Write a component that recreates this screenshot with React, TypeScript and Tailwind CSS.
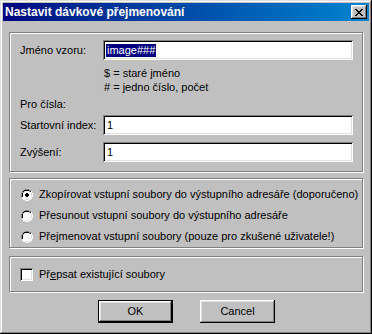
import React from "react";

const font = { fontFamily: '"Liberation Sans", Arial, sans-serif' };

function Radio({ checked }: { checked?: boolean }) {
  return (
    <svg width="12" height="12" viewBox="0 0 12 12" className="shrink-0">
      <path d="M4 0h4v1h2v1h1v2h1v4h-1v2h-1v1h-2v1h-4v-1h-2v-1h-1v-2h-1v-4h1v-2h1v-1h2z" fill="#fff" />
      <path d="M4 0h4v1h2v1h-2v-1h-4v1h-2v2h-1v4h-1v-4h1v-2h1v-1h2z" fill="#808080" />
      <path d="M4 1h4v1h2v1h-2v-1h-4v1h-1v1h-1v4h-1v-4h1v-2h1v-1h1z" fill="#000" />
      <path d="M11 4h1v4h-1v2h-1v1h-2v1h-4v-1h4v-1h2v-2h1z" fill="#fff" />
      <path d="M10 4h1v4h-1v2h-2v1h-4v-1h4v-1h1v-1h1z" fill="#dfdfdf" />
      <rect x="2" y="2" width="8" height="8" rx="3" fill="#fff" />
      {checked && <path d="M5 4h2v1h1v2h-1v1h-2v-1h-1v-2h1z" fill="#000" />}
    </svg>
  );
}

const sunken =
  "bg-white shadow-[inset_1px_1px_0_#808080,inset_-1px_-1px_0_#fff,inset_2px_2px_0_#000,inset_-2px_-2px_0_#dfdfdf]";
const raised =
  "shadow-[inset_-1px_-1px_0_#000,inset_1px_1px_0_#fff,inset_-2px_-2px_0_#808080,inset_2px_2px_0_#dfdfdf]";
const group =
  "border border-[#808080] shadow-[inset_1px_1px_0_#fff,1px_1px_0_#fff]";

export default function App() {
  return (
    <div
      style={font}
      className="w-[372px] h-[334px] bg-[#c0c0c0] p-[3px] text-[11px] text-black shadow-[inset_-1px_-1px_0_#000,inset_1px_1px_0_#dfdfdf,inset_-2px_-2px_0_#808080,inset_2px_2px_0_#fff] flex flex-col"
    >
      <div className="h-[18px] flex items-center justify-between pl-[2px] pr-[2px] bg-gradient-to-r from-[#000080] to-[#1084d0]">
        <span className="text-white font-bold text-[12px] leading-none">Nastavit dávkové přejmenování</span>
        <div className={`w-[16px] h-[14px] bg-[#c0c0c0] flex items-center justify-center ${raised}`}>
          <svg width="8" height="7" viewBox="0 0 8 7">
            <path d="M0 0h2v1h1v1h2v-1h1v-1h2v1h-1v1h-1v1h-1v1h1v1h1v1h1v1h-2v-1h-1v-1h-2v1h-1v1h-2v-1h1v-1h1v-1h1v-1h-1v-1h-1v-1h-1z" fill="#000" />
          </svg>
        </div>
      </div>

      <div className="flex flex-col px-[6px] pt-[11px]">
        {/* group 1 */}
        <div className={`${group} h-[140px] pl-[10px] pr-[9px] pt-[7px] flex flex-col`}>
          <div className="flex items-center h-[20px]">
            <span className="w-[83px]">Jméno vzoru:</span>
            <div className={`${sunken} flex-1 h-[20px] flex items-center pl-[3px]`}>
              <span className="bg-[#000080] text-white leading-[13px] px-[1px]">image###</span>
            </div>
          </div>
          <div className="pl-[84px] mt-[6px] leading-[14px]">
            <div>$ = staré jméno</div>
            <div>&#35; = jedno číslo, počet</div>
          </div>
          <div className="mt-[3px] leading-[14px]">Pro čísla:</div>
          <div className="flex items-center h-[20px] mt-[4px]">
            <span className="w-[83px]">Startovní index:</span>
            <div className={`${sunken} flex-1 h-[20px] flex items-center pl-[4px]`}>1</div>
          </div>
          <div className="flex items-center h-[20px] mt-[7px]">
            <span className="w-[83px]">Zvýšení:</span>
            <div className={`${sunken} flex-1 h-[20px] flex items-center pl-[4px]`}>1</div>
          </div>
        </div>

        {/* group 2 */}
        <div className={`${group} mt-[6px] h-[70px] pl-[11px] pt-[5px] flex flex-col`}>
          {[
            ["Zkopírovat vstupní soubory do výstupního adresáře (doporučeno)", true],
            ["Přesunout vstupní soubory do výstupního adresáře", false],
            ["Přejmenovat vstupní soubory (pouze pro zkušené uživatele!)", false],
          ].map(([t, c], i) => (
            <div key={i} className="flex items-center h-[23px] gap-[6px]">
              <Radio checked={c as boolean} />
              <span>{t as string}</span>
            </div>
          ))}
        </div>

        {/* group 3 */}
        <div className={`${group} mt-[8px] h-[36px] pl-[10px] flex items-center gap-[6px]`}>
          <div className={`${sunken} w-[13px] h-[13px]`} />
          <span>
            Př<span className="underline">e</span>psat existující soubory
          </span>
        </div>

        <div className="flex justify-center gap-[27px] mt-[8px] pl-[1px]">
          <div className="w-[75px] h-[23px] border border-black">
            <div className={`w-full h-full flex items-center justify-center ${raised}`}>OK</div>
          </div>
          <div className={`w-[75px] h-[23px] flex items-center justify-center ${raised}`}>Cancel</div>
        </div>
      </div>
    </div>
  );
}
